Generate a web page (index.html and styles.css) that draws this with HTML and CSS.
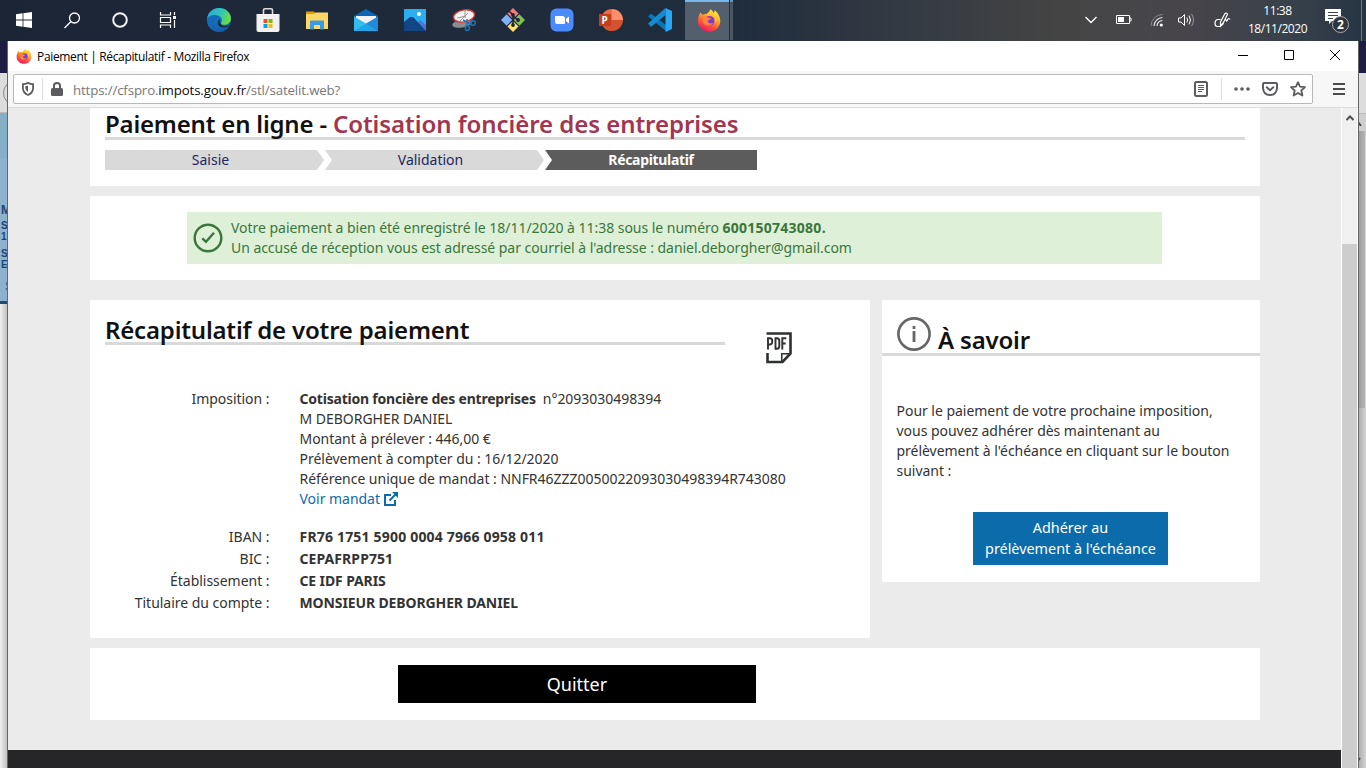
FILE: index.html
```html
<!DOCTYPE html>
<html lang="fr">
<head>
<meta charset="utf-8">
<title>Paiement | Récapitulatif</title>
<link rel="stylesheet" href="styles.css">
</head>
<body>
<svg width="0" height="0" class="defs">
  <defs>
    <linearGradient id="fxg" x1=".8" y1="0" x2=".3" y2="1"><stop offset="0" stop-color="#fff04a"/><stop offset=".35" stop-color="#ffb52e"/><stop offset=".65" stop-color="#ff5a36"/><stop offset="1" stop-color="#ed1468"/></linearGradient>
    <linearGradient id="edg" x1="0" y1="0" x2="1" y2=".4"><stop offset="0" stop-color="#2aa5df"/><stop offset=".6" stop-color="#32c4b4"/><stop offset="1" stop-color="#66dc4b"/></linearGradient>
    <linearGradient id="edb" x1="0" y1="0" x2="1" y2="1"><stop offset="0" stop-color="#1688d9"/><stop offset="1" stop-color="#1452a1"/></linearGradient>
    <symbol id="firefox" viewBox="0 0 24 24">
      <path fill="url(#fxg)" d="M3.4 4.6 5.6 6.7C7 6 8.6 5.8 9.3 6.1 10.5 4.6 12.4 4 13.4 1.2 15 2 16.2 3.5 16.6 5 17.8 4 17.4 2.8 17.3 2 21 4.4 23.4 9 23.3 13 23.2 19.2 18.2 23.7 12.3 23.7 6 23.7 1 19 .9 13 .9 9.6 2 7 3.4 4.6Z"/>
      <circle cx="12.5" cy="12.8" r="4.9" fill="#8038d8"/>
      <path fill="#ff8636" d="M5.4 8.4C8 6.8 10 8.2 10.5 9.5L14 10.1C13.4 11.7 11.5 12 10.6 13 11 15.3 13.5 16.2 16.2 14.7 14 19 6 19 5.4 12Z"/>
      <path fill="#ffd13b" d="M14 3C19 6 19 11 18 15 21 12 20 6 14 3Z"/>
    </symbol>
  </defs>
</svg>
<div class="desktop">
  <div class="back-left">
    <div class="back-title"></div>
    <div class="back-bar"><i></i></div>
    <div class="back-page"><b class="m">M</b><b>S</b><b>1</b><b class="gap">S</b><b>E</b><span>S</span></div>
  </div>
  <div class="back-right">
    <div class="back-title"></div>
    <div class="back-top"></div>
    <div class="back-scroll"><svg width="8" height="12"><path d="M-3 11 0 8 3 12" fill="none" stroke="#444" stroke-width="2"/></svg></div>
    <div class="back-thumb"></div>
    <div class="back-rest"><svg width="8" height="8"><path d="M-1 6 2 2" stroke="#444" stroke-width="2"/></svg></div>
  </div>

  <div class="taskbar">
    <div class="tiles">
      <div class="tile sm"><svg width="16" height="16"><path fill="#fff" d="M0 2.2 6.6 1.3V7.5H0ZM7.4 1.2 16 0V7.5H7.4ZM0 8.4H6.6V14.7L0 13.8ZM7.4 8.4H16V16L7.4 14.8Z"/></svg></div>
      <div class="tile sm"><svg width="17" height="17" fill="none" stroke="#fff" stroke-width="1.3"><circle cx="10.5" cy="6" r="5"/><path d="M6.8 9.7 .5 16"/></svg></div>
      <div class="tile sm"><svg width="16" height="16"><circle cx="8" cy="8" r="6.8" fill="none" stroke="#f2f2f2" stroke-width="2"/></svg></div>
      <div class="tile sm"><svg width="18" height="16" fill="none" stroke="#fff" stroke-width="1.2"><path d="M1.5 0V3H11.5V0M1.5 16V13H11.5V16M1.5 5.5H11.5V10.5H1.5ZM15.5 0V3M15.5 8V16"/><path d="M14 5.5h3" stroke-width="3"/></svg></div>
      <div class="tile first"><svg width="24" height="24" viewBox="0 0 24 24"><circle cx="12" cy="12" r="12" fill="url(#edb)"/><path fill="url(#edg)" d="M.2 10.5C1 4.6 6 0 12.2 0 19 0 24 5 24 10.3 24 15 20.5 16.8 17.2 16.8 14.7 16.8 13.3 16 14.2 14.7 16.8 11 13 7 8.5 7 4.5 7 1 9 .2 10.5Z"/><path fill="#1a2736" d="M13.1 11C11.5 14.8 14.8 18.6 18.8 18.2 20.4 18 22 17.4 23 16.7 21.4 20 15 20 12 17.8 10 15.5 10.6 12.3 13.1 11Z"/><path fill="#1460ad" d="M10 10.6C5 12 6 21 15 23.4 6 25-.5 18 .2 10.5 2 6.5 9 6.2 12 9Z" opacity=".5"/></svg></div>
      <div class="tile"><svg width="24" height="24"><path d="M7.5 7V2.2Q7.5.8 9 .8H15Q16.5.8 16.5 2.2V7" fill="none" stroke="#ddd" stroke-width="1.6"/><path fill="#f1f1f1" d="M.5 6H23.5V22Q23.5 24 21.5 24H2.5Q.5 24 .5 22Z"/><path fill="#f25022" d="M7.5 11h4v4h-4z"/><path fill="#7fba00" d="M12.5 11h4v4h-4z"/><path fill="#00a4ef" d="M7.5 16h4v4h-4z"/><path fill="#ffb900" d="M12.5 16h4v4h-4z"/></svg></div>
      <div class="tile"><svg width="22" height="20"><path fill="#e59a0c" d="M0 1.5H8L10 4H0Z"/><path fill="#ffd766" d="M0 4H8L9.5 2.5H22V19H0Z"/><path fill="#3b9be0" d="M4 11.5Q4 10.5 5 10.5H17Q18 10.5 18 11.5V19.5H14V15H8V19.5H4Z"/></svg></div>
      <div class="tile"><svg width="24" height="22"><path fill="#0a67b8" d="M0 7 12 0 24 7V14H0Z"/><path fill="#f3f3f3" d="M2 7H22V15H2Z"/><path fill="#35bdf0" d="M0 7.5 12 14.5 24 22H0Z"/><path fill="#2389d8" d="M24 7.5 12 14.5 24 22Z"/><path fill="#1fa5e8" d="M12 14.5 24 22H0Z"/></svg></div>
      <div class="tile"><svg width="22" height="22"><path fill="#2aaef0" d="M0 0H22V22H0Z"/><path fill="#4b77d1" d="M12 15 16 11 22 16V22H12Z"/><path fill="#124583" d="M0 13 6 8 9 8 22 22H0Z"/><circle cx="15" cy="5" r="2" fill="#fff"/></svg></div>
      <div class="tile"><svg width="24" height="22"><ellipse cx="10" cy="14.5" rx="10" ry="4" fill="#8b8b91" transform="rotate(-10 10 14)"/><ellipse cx="12" cy="7" rx="10.6" ry="6" fill="#f4f2f2" stroke="#d33a3a" stroke-width="1.4" transform="rotate(-10 12 7)"/><path d="M13 1V9M8 12 16 4M5 9 14 7" stroke="#999" fill="none"/><g fill="none" stroke="#1977b9" stroke-width="1.5"><path d="M11 11 20 16M15 10V17"/><circle cx="21" cy="14" r="2.3"/><ellipse cx="15.3" cy="19" rx="2" ry="2.5"/></g></svg></div>
      <div class="tile"><svg width="24" height="24" viewBox="0 0 24 24"><path fill="#f47c7c" d="M12 0 17.5 5.5 12 11 6.5 5.5Z"/><path fill="#80b3ff" d="M5.7 6.3 11.2 12 5.7 17.7 0 12Z"/><path fill="#7fc154" d="M18.3 6.3 24 12 18.3 17.7 12.8 12Z"/><path fill="#ffe070" d="M12 13 17.5 18.5 12 24 6.5 18.5Z"/><path d="M8 3 12 7V18M12 8 17 12" fill="none" stroke="#1e2630" stroke-width="1.6"/><g fill="#1e2630"><circle cx="12" cy="7" r="1.9"/><circle cx="12" cy="17" r="1.9"/><circle cx="17" cy="12" r="1.9"/></g></svg></div>
      <div class="tile"><svg width="24" height="24"><rect x=".5" y=".5" width="23" height="23" rx="6" fill="#4a8cff"/><path fill="#fff" d="M5 8H12.5Q15 8 15 10.5V16H7.5Q5 16 5 13.5ZM16 10.7 19 8.5V15.5L16 13.3Z"/></svg></div>
      <div class="tile"><svg width="24" height="22"><path fill="#ff8f6b" d="M13 0A11 11 0 0 1 24 11H13Z"/><path fill="#ed6c47" d="M13 0A11 11 0 0 0 13 22V11Z"/><path fill="#d35230" d="M2 11H24A11 11 0 0 1 2 11Z"/><rect y="5" width="12" height="12" fill="#c43e1c"/><text x="2.6" y="14.5" class="ppt">P</text></svg></div>
      <div class="tile"><svg width="24" height="24"><path fill="#0877b9" d="M0 8.5 3 5.5 18 17V23Z"/><path fill="#168bd0" d="M0 15.5 17.5 0V7L3 19Z"/><path fill="#2aa6f2" d="M17.5 0 24 3V21L17.5 24Z"/></svg></div>
      <div class="tile active"><svg width="24" height="24"><use href="#firefox"/></svg></div>
      <div class="stack"></div>
    </div>
    <div class="tray">
      <svg class="t1" width="12" height="8" fill="none" stroke="#fff" stroke-width="1.3"><path d="M.5 1 6 6.5 11.5 1"/></svg>
      <svg class="t2" width="16" height="10"><path d="M.5.5H13.5V8.5H.5ZM14 3H15V6H14" fill="none" stroke="#fff"/><path fill="#fff" d="M2 2H8V7H2Z"/></svg>
      <svg class="t3" width="14" height="14" fill="none"><path d="M1 13A11.5 11.5 0 0 1 12.5 1.5" stroke="#888"/><path d="M4 13A9 9 0 0 1 12.5 4.5M7 13A6 6 0 0 1 12.5 7.5" stroke="#e5e5e5" stroke-width="1.2"/><circle cx="11.3" cy="12" r="1.6" fill="#fff"/></svg>
      <svg class="t4" width="17" height="14" fill="none" stroke="#fff"><path d="M.5 5H3L6.5 1.5V12.5L3 9H.5Z"/><path d="M8.8 4.5Q10.5 7 8.8 9.5M11 2.5Q14 7 11 11.5"/><path d="M13.5.8Q17.5 7 13.5 13.2" stroke="#999"/></svg>
      <svg class="t5" width="17" height="16" fill="none" stroke="#fff" stroke-width="1.2"><path d="M6.5 14 6.5 10 10.8 1.8Q12.5.2 13.5 2.2L9.5 10.5ZM6.5 7.5H3.5Q1 8 1 11.5 1 14.5 3.5 14.5H6.5L9 12Q11 5.5 12 8 12.5 10.5 14 7 14.8 5.8 16 7.5"/></svg>
      <div class="clock"><span>11:38</span><span>18/11/2020</span></div>
      <div class="notif"><svg width="26" height="26"><path fill="#fff" d="M1 1H17V13H8L5 16V13H1Z"/><path d="M4 4.5H14M4 7.5H14M4 10.5H9" stroke="#3b444f"/><circle cx="16.5" cy="16.5" r="8" fill="#30353b" stroke="#aaa"/></svg><b>2</b></div>
    </div>
  </div>

  <div class="window">
    <div class="titlebar">
      <svg width="16" height="16"><use href="#firefox"/></svg>
      <span class="wtitle">Paiement | Récapitulatif - Mozilla Firefox</span>
      <div class="controls">
        <svg width="10" height="10" stroke="#000"><path d="M0 5.5H10"/></svg>
        <svg width="10" height="10" stroke="#000" fill="none"><path d="M.5.5H9.5V9.5H.5Z"/></svg>
        <svg width="10" height="10" stroke="#000"><path d="M0 0 10 10M10 0 0 10"/></svg>
      </div>
    </div>
    <div class="toolbar">
      <div class="urlbar">
        <svg class="shield" width="12" height="14"><path d="M6 .9Q8.5 2.2 11.1 2.2V6Q11.1 10.7 6 13 .9 10.7.9 6V2.2Q3.5 2.2 6 .9Z" fill="none" stroke="#5b5b60" stroke-width="1.8"/><path d="M6 3.5V10Q3.3 8.5 3.3 6V4.3Q5 4.2 6 3.5Z" fill="#5b5b60"/></svg>
        <i class="sep"></i>
        <svg class="lock" width="12" height="14"><path d="M3 6V3.5Q3 1 6 1T9 3.5V6" fill="none" stroke="#5b5b60" stroke-width="2"/><rect y="6" width="12" height="8" rx="1.5" fill="#5b5b60"/></svg>
        <span class="url">https://cfspro.<em>impots.gouv.fr</em>/stl/satelit.web?</span>
        <div class="actions">
          <svg width="14" height="16" fill="none" stroke="#5b5b60"><rect x="1" y="1" width="12" height="14" rx="1.5" stroke-width="2"/><path d="M4 4.5H10M4 6.5H10M4 8.5H10M4 10.5H8"/></svg>
          <i class="sep"></i>
          <svg width="16" height="16" fill="#5b5b60"><circle cx="2" cy="8" r="1.8"/><circle cx="8" cy="8" r="1.8"/><circle cx="14" cy="8" r="1.8"/></svg>
          <svg width="16" height="16" fill="none" stroke="#5b5b60" stroke-width="2" stroke-linecap="round" stroke-linejoin="round"><path d="M2 2H14Q15 2 15 3V7Q14.5 14 8 14 1.5 14 1 7V3Q1 2 2 2ZM4.7 6.3 8 9.3 11.3 6.3"/></svg>
          <svg width="16" height="16" fill="none" stroke="#5b5b60" stroke-width="1.8" stroke-linejoin="round"><path d="M8 1.2 10 5.7 15 6.2 11.3 9.5 12.4 14.5 8 12 3.6 14.5 4.7 9.5 1 6.2 6 5.7Z"/></svg>
        </div>
      </div>
      <svg class="burger" width="12" height="12" fill="#4a4a4f"><path d="M0 0H12V2H0ZM0 5H12V7H0ZM0 10H12V12H0Z"/></svg>
    </div>
    <div class="view">
      <main class="page">
        <div class="container">
          <section class="card head">
            <h1>Paiement en ligne - <span>Cotisation foncière des entreprises</span></h1>
            <div class="steps">
              <div class="step s1">Saisie</div>
              <div class="step s2">Validation</div>
              <div class="step s3">Récapitulatif</div>
            </div>
          </section>
          <section class="card notice">
            <div class="alert">
              <svg width="30" height="30" fill="none" stroke="#3a763c"><circle cx="15" cy="15" r="13.3" stroke-width="2.4"/><path d="M9.3 15.3 13 18.8 21 9.8" stroke-width="2.4"/></svg>
              <div><p class="l1">Votre paiement a bien été enregistré le 18/11/2020 à 11:38 sous le numéro <b>600150743080.</b></p><p class="l2">Un accusé de réception vous est adressé par courriel à l'adresse : daniel.deborgher@gmail.com</p></div>
            </div>
          </section>
          <div class="columns">
            <section class="card recap">
              <div class="recap-head">
                <h2>Récapitulatif de votre paiement</h2>
                <svg class="pdf" width="26" height="32" fill="none" stroke="#2f3033"><path d="M.5 1.5H24.5V21.5L16.5 30H1.5V21" stroke-width="2.6"/><path d="M15.8 29V21.8H24" stroke-width="1.5"/><path d="M2 17.5V6.3H4Q6.3 6.3 6.3 9.3T4 12.5H2M9.5 6.3V16.7H11Q13.3 16.7 13.3 14V9Q13.3 6.3 11 6.3ZM16.3 17.5V6.3H20.3M16.3 11.5H19.7" stroke-width="1.9"/></svg>
              </div>
              <div class="row first-row">
                <div class="lab">Imposition :</div>
                <div class="val">
                  <p><b class="tax">Cotisation foncière des entreprises</b>n°2093030498394</p>
                  <p>M DEBORGHER DANIEL</p>
                  <p>Montant à prélever : 446,00 €</p>
                  <p>Prélèvement à compter du : 16/12/2020</p>
                  <p>Référence unique de mandat : NNFR46ZZZ0050022093030498394R743080</p>
                  <p><a>Voir mandat <svg width="14" height="14" fill="none" stroke="#0b6bab" stroke-width="2"><path d="M7 3H1V13H11V8M5.5 8.5 12 2"/><path d="M8 0H14V6Z" fill="#0b6bab" stroke="none"/></svg></a></p>
                </div>
              </div>
              <div class="row"><div class="lab">IBAN :</div><b class="val iban">FR76 1751 5900 0004 7966 0958 011</b></div>
              <div class="row"><div class="lab">BIC :</div><b class="val bic">CEPAFRPP751</b></div>
              <div class="row"><div class="lab">Établissement :</div><b class="val name">CE IDF PARIS</b></div>
              <div class="row"><div class="lab">Titulaire du compte :</div><b class="val name">MONSIEUR DEBORGHER DANIEL</b></div>
            </section>
            <aside class="card side">
              <div class="side-head">
                <svg width="34" height="34" fill="none" stroke="#666"><circle cx="17" cy="17" r="15.6" stroke-width="2.6"/><path d="M17 14V25M17 9V12" stroke-width="2.8"/></svg>
                <h2>À savoir</h2>
              </div>
              <p>Pour le paiement de votre prochaine imposition,<br>vous pouvez adhérer dès maintenant au<br>prélèvement à l'échéance en cliquant sur le bouton<br>suivant :</p>
              <button class="join">Adhérer au<br>prélèvement à l'échéance</button>
            </aside>
          </div>
          <section class="card quit"><button>Quitter</button></section>
        </div>
        <div class="foot"></div>
      </main>
      <div class="scrollbar">
        <svg width="8" height="6"><path d="M.5 5 4 1.5 7.5 5" fill="none" stroke="#505050" stroke-width="2"/></svg>
        <div class="thumb"></div>
      </div>
    </div>
  </div>
</div>
</body>
</html>
```
FILE: styles.css
```css
* { box-sizing: border-box; }
body { margin: 0; font-family: "Noto Sans", "Open Sans", sans-serif; font-size: 14px; color: #333; }
h1, h2, p { margin: 0; }
svg { display: block; flex: none; }
.defs { position: absolute; }
.desktop { position: relative; width: 1366px; height: 768px; overflow: hidden; background: #1e1c42; }

.taskbar { height: 41px; display: flex; justify-content: space-between; background: linear-gradient(90deg, #1c2535 0, #1f2b3b 500px, #202d3d 740px, #333a43 900px, #444 1060px, #46464a 1140px, #48444a 1190px, #38414b 1290px, #263443 1366px); }
.tiles { display: flex; }
.tile { width: 49px; height: 40px; display: flex; align-items: center; justify-content: center; }
.tile.sm { width: 48px; }
.tile.first { margin-left: 2px; }
.tile.active { width: 44px; margin-left: 1px; padding: 0 0 2px 3px; background: #535f6d; border-top: 2px solid #76b9ed; }
.stack { width: 3px; margin-left: 1px; height: 40px; background: #4b5663; border-top: 2px solid #5e96c2; }
.ppt { font: bold 10px "Open Sans", sans-serif; fill: #fff; }
.tray { display: flex; align-items: center; padding-bottom: 1px; border-right: 1px solid #778; margin-right: 4px; color: #fff; }
.t2 { margin-left: 19px; }
.t3 { margin-left: 18px; }
.t4 { margin-left: 14px; }
.t5 { margin-left: 19px; }
.clock { width: 62px; margin-left: 16px; padding-right: 1px; display: flex; flex-direction: column; align-items: center; font: 12px/18px "Open Sans", sans-serif; letter-spacing: -.45px; white-space: nowrap; }
.notif { position: relative; width: 26px; margin: 2px 11px 0 15px; }
.notif b { position: absolute; left: 13px; top: 8px; font: bold 12px/17px "Open Sans", sans-serif; }

.back-left { position: absolute; left: 0; top: 41px; width: 8px; height: 727px; background: linear-gradient(90deg, #f0f0f0, #bbb); overflow: hidden; }
.back-title { height: 32px; background: #1e1c42; }
.back-bar { height: 40px; background: #ddd; border-bottom: 1px solid #bbb; overflow: hidden; }
.back-bar i { display: block; width: 26px; height: 26px; margin: 7px 0 0 3px; border: 1px solid #888; border-radius: 50%; }
.back-page { height: 191px; padding: 89px 0 0 1px; background: linear-gradient(#84afc6 0 45px, #8db2cd 45px); border-bottom: 3px solid #204b73; color: #1b4679; display: flex; flex-direction: column; font: 10px/11px "Liberation Sans", sans-serif; }
.back-page .m { margin-bottom: 2px; font-size: 12px; line-height: 16px; }
.back-page .gap { margin-top: 6px; }
.back-page span { margin: 7px 0 0 4px; color: #236e92; font: bold 15px/17px "Liberation Sans", sans-serif; }
.back-right { position: absolute; left: 1358px; top: 41px; width: 8px; height: 727px; overflow: hidden; background: #cfcfcf; }
.back-top { height: 41px; background: #ddd; border-bottom: 1px solid #bbb; }
.back-scroll { height: 17px; background: #cfcfcf; }
.back-thumb { height: 277px; width: 7px; background: linear-gradient(90deg, #999, #b5b5b5); }
.back-rest { height: 360px; padding-top: 348px; background: linear-gradient(90deg, #aaa, #d3d3d3); }

.window { position: absolute; left: 7px; top: 41px; width: 1352px; height: 727px; border: solid #666; border-width: 0 1px; background: #fff; }
.titlebar { height: 30px; display: flex; align-items: center; padding-left: 8px; }
.wtitle { margin-left: 5px; font: 12px "Open Sans", sans-serif; color: #000; letter-spacing: -.34px; }
.controls { margin-left: auto; display: flex; gap: 36px; padding: 0 18px 2px 0; }
.toolbar { height: 37px; display: flex; padding: 3px 0 0 5px; background: #f7f7f8; border-bottom: 1px solid #dcdcdc; }
.urlbar { width: 1300px; height: 30px; display: flex; align-items: center; border: 1px solid #b8b8b8; border-radius: 2px; background: #fff; padding-left: 8px; }
.sep { width: 1px; height: 22px; background: #dcdcdc; }
.shield + .sep { margin: 0 8px; }
.url { margin-left: 10px; padding-top: 1px; font: 13.3px "Open Sans", sans-serif; letter-spacing: -.15px; color: #777; }
.url em { color: #0c0c0d; font-style: normal; }
.actions { margin-left: auto; display: flex; align-items: center; gap: 12px; padding-right: 6px; }
.actions .sep { margin-left: 1px; }
.burger { margin: 9px 0 0 20px; }

.view { height: 660px; display: flex; }
.page { width: 1333px; background: #ebebeb; display: flex; flex-direction: column; }
.container { width: 1170px; margin-left: 82px; }
.card { background: #fff; }
h1, h2 { font: 600 24px/30px "Noto Sans", sans-serif; letter-spacing: -.19px; color: #111; white-space: nowrap; }
.head { height: 78px; padding: 0 15px; }
h1 { height: 32px; line-height: 32px; border-bottom: 3px solid #d9d9d9; }
h1 span { color: #a3354f; letter-spacing: -.06px; }
.steps { display: flex; margin-top: 10px; width: 652px; line-height: 20px; text-align: center; }
.step { height: 20px; background: #d9d9d9; color: #25265b; }
.s1 { width: 219px; padding-right: 8px; clip-path: polygon(0 0, 212px 0, 100% 50%, 212px 100%, 0 100%); }
.s2 { width: 219px; margin-left: 1px; padding-right: 8px; clip-path: polygon(0 0, 212px 0, 100% 50%, 212px 100%, 0 100%, 7px 50%); }
.s3 { width: 212px; margin-left: 1px; background: #5c5c5c; color: #fff; font-weight: bold; letter-spacing: -.32px; clip-path: polygon(0 0, 100% 0, 100% 100%, 0 100%, 7px 50%); }
.notice { height: 84px; margin-top: 10px; padding: 16px 98px 0 97px; }
.alert { height: 52px; display: flex; align-items: center; gap: 8px; padding-left: 6px; background: #dff0d8; color: #3a763c; line-height: 20px; white-space: nowrap; }
.l1 { letter-spacing: -.03px; }
.l1 b { letter-spacing: .25px; }
.l2 { letter-spacing: -.045px; }
.columns { display: flex; align-items: flex-start; gap: 12px; margin-top: 20px; }
.recap { width: 780px; height: 338px; padding: 15px 15px 0; }
.recap-head { display: flex; height: 74px; }
.recap-head h2 { width: 620px; height: 30px; border-bottom: 3px solid #d9d9d9; }
.pdf { margin: 17px 0 0 41px; }
.row { display: flex; height: 22px; line-height: 22px; white-space: nowrap; }
.first-row { height: 137px; line-height: 20px; letter-spacing: -.025px; }
.lab { width: 164.5px; margin-right: 30px; text-align: right; letter-spacing: -.03px; }
.tax { margin-right: 7px; letter-spacing: -.21px; }
.iban { letter-spacing: .19px; }
.bic { letter-spacing: .08px; }
.name { letter-spacing: -.12px; }
a { color: #0b6bab; display: inline-flex; align-items: center; gap: 4px; }
a svg { margin-top: -1px; }
.side { width: 378px; height: 282px; padding-top: 17px; }
.side-head { height: 39px; padding-left: 15px; display: flex; gap: 7px; border-bottom: 3px solid #d9d9d9; }
.side-head h2 { padding-top: 8px; line-height: 30px; }
.side p { margin: 45px 0 31px 14.5px; line-height: 20px; letter-spacing: -.03px; white-space: nowrap; }
button { display: block; border: 0; padding: 0; color: #fff; font-family: inherit; }
.join { width: 195px; height: 53px; margin-left: 91px; padding-bottom: 2px; background: #0b6bab; font-size: 14.4px; line-height: 21px; white-space: nowrap; }
.quit { height: 72px; margin-top: 10px; padding: 17px 0 0 308px; }
.quit button { width: 358px; height: 38px; background: #000; font-size: 18px; }
.foot { height: 18px; margin-top: auto; background: #262628; }
.scrollbar { width: 17px; border: solid #fff; border-width: 0 1px; background: #f0f0f0; }
.scrollbar svg { margin: 7px 0 0 4px; }
.thumb { height: 524px; margin-top: 123px; background: #cdcdcd; }
```
